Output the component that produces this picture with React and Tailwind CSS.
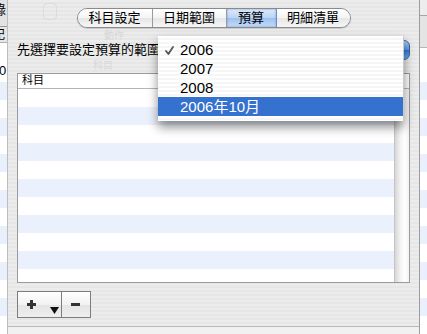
const stripeRows = [0, 1, 2, 3, 4, 5, 6, 7, 8, 9, 10, 11, 12, 13];

function StripRows() {
  return (
    <div className="flex flex-col">
      {stripeRows.map((i) => (
        <div
          key={i}
          className={i % 2 === 0 ? "h-[18px] bg-[#e9f0fc]" : "h-[18px] bg-white"}
        />
      ))}
    </div>
  );
}

function LeftStrip() {
  return (
    <div className="w-[7px] flex-none flex flex-col overflow-hidden bg-white">
      <div className="h-[28px] bg-[#e2e2e2] border-b border-[#9a9a9a] flex items-start pt-[2px]">
        <span className="-ml-[7px] text-[13px] leading-[16px] whitespace-nowrap">錄</span>
      </div>
      <div className="h-[17px] bg-[#e6e6e6] border-b border-[#b0b0b0] flex items-center">
        <span className="-ml-[7px] text-[12px] leading-[14px] whitespace-nowrap">記</span>
      </div>
      <div className="h-[40px] bg-white flex items-end pb-[4px]">
        <span className="-ml-[1px] text-[13px] leading-[14px] font-['Liberation_Sans',sans-serif]">0</span>
      </div>
      <StripRows />
    </div>
  );
}

function RightStrip() {
  return (
    <div className="w-[7px] flex-none flex flex-col overflow-hidden bg-white">
      <div className="h-[17px] bg-[#ededed] border-b border-[#a5a5a5]" />
      <div className="h-[33px] bg-[#e4e4e4] border-b border-[#b5b5b5]" />
      <div className="h-[35px] bg-white" />
      <StripRows />
    </div>
  );
}

function Tabs() {
  return (
    <div className="flex h-[20px] w-[274px] rounded-[10px] border border-[#8a8a8a] overflow-hidden shadow-[0_1px_1px_rgba(0,0,0,0.15)] text-[13px] leading-[18px]">
      <div className="w-[75px] flex items-center justify-center bg-[linear-gradient(to_bottom,#ffffff,#f4f4f4_50%,#e6e6e6_51%,#f6f6f6)] border-r border-[#9a9a9a]">
        科目設定
      </div>
      <div className="w-[74px] flex items-center justify-center bg-[linear-gradient(to_bottom,#ffffff,#f4f4f4_50%,#e6e6e6_51%,#f6f6f6)] border-r border-[#9a9a9a]">
        日期範圍
      </div>
      <div className="w-[50px] flex items-center justify-center bg-[linear-gradient(to_bottom,#dfeafa,#b9d3f5_50%,#9cc0f0_51%,#c6dcf8)] border-r border-[#6b8fc4] shadow-[inset_0_0_2px_#5d8fd8]">
        預算
      </div>
      <div className="flex-1 flex items-center justify-center bg-[linear-gradient(to_bottom,#ffffff,#f4f4f4_50%,#e6e6e6_51%,#f6f6f6)]">
        明細清單
      </div>
    </div>
  );
}

function Check() {
  return (
    <svg width="9" height="9" viewBox="0 0 9 9" className="block">
      <path d="M1 5 L3.4 8 L8 1" fill="none" stroke="#555" strokeWidth="1.8" strokeLinecap="round" strokeLinejoin="round" />
    </svg>
  );
}

function Menu() {
  return (
    <div className="absolute left-[-2px] top-[-4px] w-[246px] h-[85px] z-10 bg-[repeating-linear-gradient(to_bottom,#ffffff_0px,#ffffff_2px,#f6f6f6_2px,#f6f6f6_4px)] border-r border-[#c9c9c9] shadow-[0_6px_10px_rgba(0,0,0,0.45)] pt-[4px] font-['Liberation_Sans','Noto_Sans_CJK_TC',sans-serif] text-[15px]">
      <div className="h-[19px] flex items-center relative pl-[22px] leading-[19px]">
        <span className="absolute left-[7px] top-[6px]"><Check /></span>
        2006
      </div>
      <div className="h-[19px] flex items-center pl-[22px] leading-[19px]">2007</div>
      <div className="h-[19px] flex items-center pl-[22px] leading-[19px]">2008</div>
      <div className="h-[19px] flex items-center pl-[22px] leading-[19px] bg-[#3571cf] text-white">
        2006年10月
      </div>
    </div>
  );
}

function TableRows() {
  const rows = [0, 1, 2, 3, 4, 5, 6, 7, 8, 9, 10];
  return (
    <div className="w-[376px] flex flex-col overflow-hidden">
      {rows.map((i) => (
        <div
          key={i}
          className={i % 2 === 0 ? "h-[18px] flex-none bg-white" : "h-[18px] flex-none bg-[#ebf1fc]"}
        />
      ))}
    </div>
  );
}

function Sheet() {
  return (
    <div className="w-[413px] flex-none flex flex-col border-l border-[#bdbdbd] border-r border-r-[#9e9e9e]">
      <div className="h-[327px] flex-none relative flex flex-col border-b border-[#b8b8b8] bg-[repeating-linear-gradient(to_bottom,#ececec_0px,#ececec_2px,#e6e6e6_2px,#e6e6e6_4px)]">
        {/* ghosts of window behind */}
        <div className="absolute left-[35px] top-[3px] w-[14px] h-[17px] rounded-[4px] border border-[#dcdcdc]" />
        <div className="absolute left-[96px] top-[31px] text-[10px] leading-[9px] text-[#d6d6d6]">動作</div>
        <div className="absolute left-[85px] top-[61px] text-[10px] leading-[9px] text-[#d8d8d8]">科目</div>

        <div className="pt-[8px] flex justify-center">
          <Tabs />
        </div>

        <div className="mt-[12px] h-[20px] flex items-center pl-[9px] pr-[9px]">
          <span className="text-[13px] leading-[20px] whitespace-nowrap">先選擇要設定預算的範圍</span>
          <div className="flex-1 h-[20px] relative flex">
            <div className="flex-1 bg-white rounded-l-[5px] border border-[#9c9c9c]" />
            <div className="w-[20px] rounded-r-[6px] bg-[linear-gradient(to_bottom,#a9cdf6,#5a9ae6_50%,#2f78d8_51%,#6fb0f2)] border border-[#3a5f9a] flex items-center justify-center" />
            <Menu />
          </div>
        </div>

        <div className="mt-[13px] ml-[9px] w-[393px] h-[210px] border border-[#9b9b9b] bg-white flex flex-col">
          <div className="h-[15px] flex-none flex border-b border-[#b5b5b5] text-[11px] leading-[14px]">
            <div className="w-[280px] pl-[4px]">科目</div>
            <div className="w-[96px] border-l border-[#e2e2e2] flex justify-center text-[#d4d4d4]">預算金額</div>
            <div className="w-[15px] border-l border-[#c9c9c9]" />
          </div>
          <div className="flex-1 flex overflow-hidden">
            <TableRows />
            <div className="w-[15px] border-l border-[#c4c4c4] bg-[linear-gradient(to_right,#d6d6d6,#f4f4f4_40%,#ffffff_70%,#f2f2f2)]" />
          </div>
        </div>

        <div className="mt-[8px] ml-[9px] flex h-[27px] w-[74px] border border-[#7d7d7d] bg-[linear-gradient(to_bottom,#ffffff,#f2f2f2_50%,#e4e4e4_51%,#eeeeee)]">
          <div className="w-[44px] relative border-r border-[#7d7d7d]">
            <svg width="9" height="9" viewBox="0 0 9 9" className="absolute left-[9px] top-[8px]">
              <rect x="3" y="0" width="3" height="9" fill="#333" />
              <rect x="0" y="3" width="9" height="3" fill="#333" />
            </svg>
            <svg width="9" height="7" viewBox="0 0 9 7" className="absolute left-[32px] top-[15px]">
              <path d="M0 0 L9 0 L4.5 7 Z" fill="#111" />
            </svg>
          </div>
          <div className="flex-1 relative">
            <svg width="9" height="3" viewBox="0 0 9 3" className="absolute left-[9px] top-[11px]">
              <rect x="0" y="0" width="9" height="3" fill="#333" />
            </svg>
          </div>
        </div>
      </div>
      <div className="flex-1 bg-[#f1f1f1]" />
    </div>
  );
}

export default function App() {
  return (
    <div className="w-[427px] h-[334px] overflow-hidden flex bg-white text-black font-['DejaVu_Sans','Noto_Sans_CJK_TC',sans-serif]">
      <LeftStrip />
      <Sheet />
      <RightStrip />
    </div>
  );
}
